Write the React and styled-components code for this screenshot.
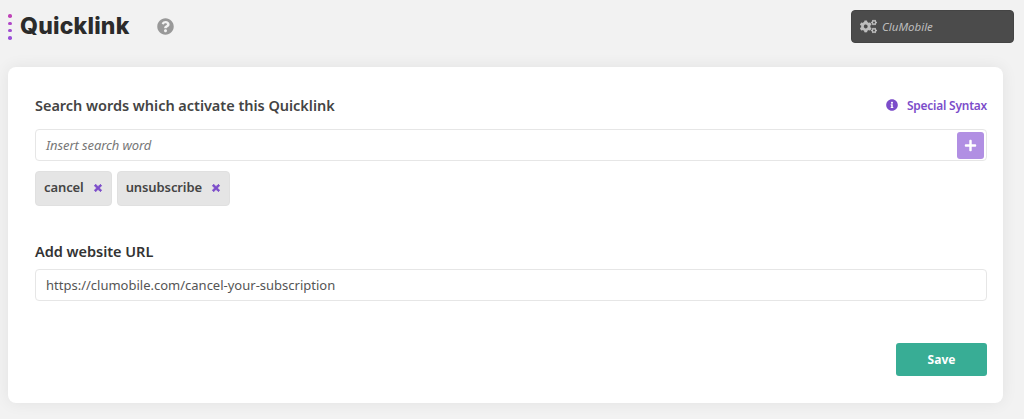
import React from "react";
import styled, { createGlobalStyle } from "styled-components";
import { FaCogs, FaInfoCircle, FaQuestionCircle, FaPlus, FaTimes } from "react-icons/fa";

const Global = createGlobalStyle`
  html, body { margin: 0; padding: 0; background: #f2f2f2; height: 419px; overflow: hidden; }
  * { box-sizing: border-box; }
  body { font-family: "Noto Sans", "Open Sans", sans-serif; }
`;
const Page = styled.div`
  width: 1024px; height: 419px; padding: 10px 10px 16px 8px;
  display: flex; flex-direction: column; gap: 24px;
`;
const Header = styled.header`
  display: flex; align-items: center; justify-content: space-between; height: 33px;
`;
const TitleGroup = styled.div`display: flex; align-items: center; height: 33px;`;
const Dots = styled.div`
  display: flex; flex-direction: column; gap: 3.6px; margin-right: 8px; margin-top: 1px;
  width: 4px;
`;
const Dot = styled.span`
  width: 3.6px; height: 3.6px; border-radius: 50%; background: ${p => p.$c};
`;
const Title = styled.h1`
  margin: 0; font: 800 23px/33px Inter, sans-serif; letter-spacing: 0.2px; color: #2b2b2b;
`;
const Help = styled.span`
  display: flex; margin-left: 27px; color: #999; font-size: 17px;
`;
const Account = styled.div`
  width: 163px; height: 33px; background: #4b4b4b; border-radius: 4px; border: 1px solid #444;
  display: flex; align-items: center; gap: 5px; padding-left: 8px; color: #bdbdbd;
  font: italic 400 11.5px "Noto Sans", sans-serif;
`;
const Card = styled.main`
  flex: 1; background: #fff; border-radius: 8px; padding: 28px 16px 27px 27px; margin-right: 11px;
  box-shadow: 0 0 16px rgba(0,0,0,.07); display: flex; flex-direction: column;
`;
const LabelRow = styled.div`display: flex; align-items: center; justify-content: space-between; height: 20px;`;
const Label = styled.label`
  display: block; font: 600 14.5px/20px "Noto Sans", sans-serif; color: ${p => p.$dark ? "#333" : "#444"};
  letter-spacing: -0.03px;
`;
const Syntax = styled.a`
  display: flex; align-items: center; gap: 9px; color: #7c4dca; font: 600 11.9px/20px "Noto Sans", sans-serif;
  letter-spacing: -0.2px;
`;
const Field = styled.div`
  margin-top: ${p => p.$mt}px; height: 32px; border: 1px solid #e6e6e6; border-radius: 4px;
  display: flex; align-items: center; justify-content: space-between; padding: 0 2px 0 10px;
  font: ${p => p.$placeholder ? "italic" : "normal"} 400 13px "Noto Sans", sans-serif;
  color: ${p => p.$placeholder ? "#777" : "#555"}; letter-spacing: ${p => p.$placeholder ? "-0.1px" : "0"};
`;
const AddButton = styled.button`
  width: 27px; height: 27px; border: 0; border-radius: 3px; background: #b18fe3; color: #fff;
  display: flex; align-items: center; justify-content: center; padding: 0; font-size: 13px;
`;
const Tags = styled.div`display: flex; gap: 5px; margin-top: 10px;`;
const Tag = styled.span`
  height: 35px; background: #e5e5e5; border: 1px solid #e0e0e0; border-radius: 4px; padding: 0 8px 3px;
  display: flex; align-items: center; gap: 9px; color: #444; font: 600 13px "Noto Sans", sans-serif;
  letter-spacing: -0.1px;
`;
const TagX = styled.span`
  display: flex; color: #7c4dca; font-size: 10px; margin-top: 2px;
  svg { stroke: currentColor; stroke-width: 50; }
`;
const Section = styled.section`margin-top: 35px;`;
const Footer = styled.div`display: flex; justify-content: flex-end; margin-top: 42px;`;
const Save = styled.button`
  width: 91px; height: 33px; border: 0; border-radius: 3px; background: #38ad95; color: #fff;
  font: 700 12px "Noto Sans", sans-serif;
`;

export default function App() {
  return (
    <Page>
      <Global />
      <Header>
        <TitleGroup>
          <Dots>
            <Dot $c="#c044b8" /><Dot $c="#b048c8" /><Dot $c="#a04ed0" /><Dot $c="#9a50d8" />
          </Dots>
          <Title>Quicklink</Title>
          <Help><FaQuestionCircle /></Help>
        </TitleGroup>
        <Account><FaCogs size={17} />CluMobile</Account>
      </Header>
      <Card>
        <LabelRow>
          <Label>Search words which activate this Quicklink</Label>
          <Syntax><FaInfoCircle size={12} />Special Syntax</Syntax>
        </LabelRow>
        <Field $mt={14} $placeholder>
          Insert search word
          <AddButton><FaPlus /></AddButton>
        </Field>
        <Tags>
          <Tag>cancel<TagX><FaTimes /></TagX></Tag>
          <Tag>unsubscribe<TagX><FaTimes /></TagX></Tag>
        </Tags>
        <Section>
          <Label $dark>Add website URL</Label>
          <Field $mt={8}>https://clumobile.com/cancel-your-subscription</Field>
        </Section>
        <Footer><Save>Save</Save></Footer>
      </Card>
    </Page>
  );
}
